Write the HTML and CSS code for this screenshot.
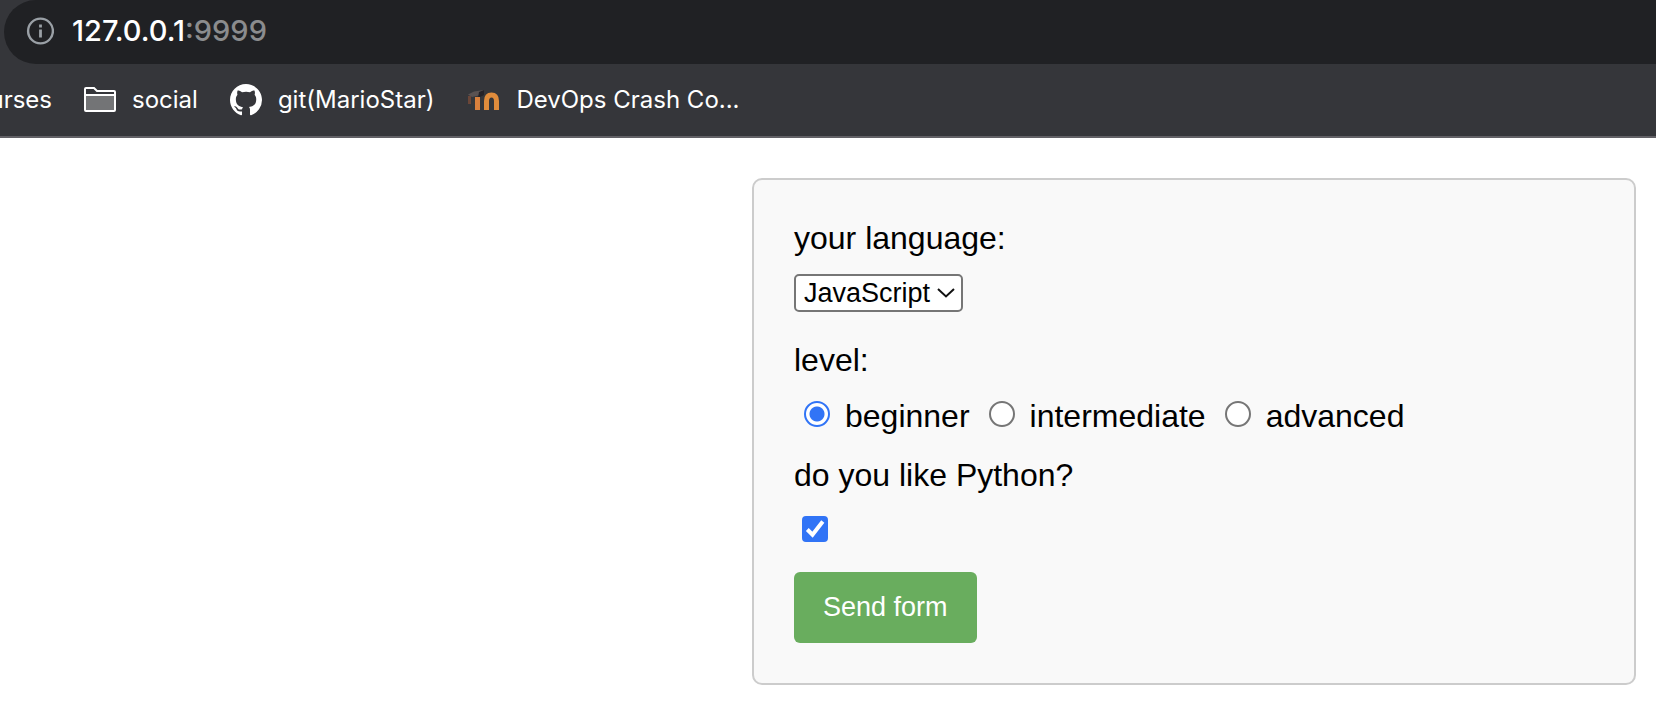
FILE: index.html
```html
<!DOCTYPE html>
<html lang="en">
<head>
<meta charset="utf-8">
<title>127.0.0.1:9999</title>
<link rel="stylesheet" href="styles.css">
</head>
<body>
<header class="browser">
  <div class="address">
    <button class="info" type="button" aria-label="Site information">
      <svg width="28" height="28" viewBox="0 0 28 28" fill="none" stroke="#9aa0a6">
        <circle cx="14.500" cy="14" r="12.4" stroke-width="2.4"/>
        <path d="M14.500 12.600V20.600M14.500 7.600V10.400" stroke-width="2.8"/>
      </svg>
    </button>
    <div class="url">127.0.0.1<span class="port">:9999</span></div>
  </div>
  <nav class="bookmarks">
    <a class="bookmark clipped" href="#">courses</a>
    <a class="bookmark" href="#">
      <svg width="32" height="32" viewBox="0 0 32 32">
        <path d="M2 11h28v16H2z" fill="#737476"/>
        <path d="M1 26V5q0-1 1-1h8l3 3H30q1 0 1 1v18q0 1-1 1H2q-1 0-1-1z" fill="none" stroke="#fff" stroke-width="2"/>
        <path d="M1 11h30" stroke="#fff" stroke-width="2"/>
      </svg>
      <span>social</span>
    </a>
    <a class="bookmark" href="#">
      <svg width="32" height="32" viewBox="0 0 16 16" fill="#fff">
        <path d="M8 0C3.580 0 0 3.580 0 8c0 3.540 2.290 6.530 5.470 7.590.4.070.55-.17.55-.38 0-.19-.01-.82-.01-1.490-2.010.37-2.530-.49-2.690-.94-.09-.23-.48-.94-.82-1.130-.28-.15-.68-.52-.01-.53.63-.01 1.080.58 1.230.82.72 1.210 1.870.87 2.330.66.07-.52.28-.87.51-1.070-1.780-.2-3.640-.89-3.640-3.950 0-.87.31-1.590.82-2.150-.08-.2-.36-1.020.08-2.120 0 0 .67-.21 2.200.82.64-.18 1.320-.27 2-.27s1.360.09 2 .27c1.530-1.040 2.200-.82 2.200-.82.44 1.100.16 1.920.08 2.120.51.56.82 1.270.82 2.150 0 3.070-1.870 3.750-3.650 3.950.29.25.54.73.54 1.480 0 1.070-.01 1.930-.01 2.200 0 .21.15.46.55.38A8.010 8.010 0 0 0 16 8c0-4.420-3.580-8-8-8z"/>
      </svg>
      <span>git(MarioStar)</span>
    </a>
    <a class="bookmark" href="#">
      <svg width="34" height="32" viewBox="0 0 34 32" fill="none">
        <path d="M2 10.500l6-3 10-1.500-3 5-9 2z" fill="#5a5252"/>
        <path d="M3.500 12v8" stroke="#6b4638" stroke-width="3"/>
        <path d="M13 8l5-2v5l-6 3z" fill="#242228"/>
        <path d="M11.500 13V26" stroke="#d9803d" stroke-width="5"/>
        <path d="M20.500 26v-9q0-6 5-6t5 6v9" stroke="#e08c3c" stroke-width="5"/>
      </svg>
      <span>DevOps Crash Co...</span>
    </a>
  </nav>
</header>
<main class="page">
  <form class="card">
    <div class="field field-select">
      <label for="language">your language:</label>
      <span class="select-wrap">
        <select id="language" class="select">
          <option>JavaScript</option>
        </select>
        <svg class="chevron" width="18" height="10" viewBox="0 0 18 10" fill="none" stroke="#111" stroke-width="2"><path d="M1 1l8 7.500L17 1"/></svg>
      </span>
    </div>
    <fieldset class="level">
      <legend>level:</legend>
      <div class="options">
        <label class="option"><input class="radio" type="radio" name="level" checked>beginner</label>
        <label class="option"><input class="radio" type="radio" name="level">intermediate</label>
        <label class="option"><input class="radio" type="radio" name="level">advanced</label>
      </div>
    </fieldset>
    <div class="field field-check">
      <label for="python">do you like Python?</label>
      <span class="check-wrap">
        <input id="python" class="checkbox" type="checkbox" checked>
        <svg class="tick" width="26" height="26" viewBox="0 0 26 26" fill="none" stroke="#fff" stroke-width="4"><path d="M5.300 13.500l5.200 5.200L20.800 5.500"/></svg>
      </span>
    </div>
    <button class="send" type="submit">Send form</button>
  </form>
</main>
</body>
</html>
```
FILE: styles.css
```css
* { box-sizing: border-box; }
body { margin: 0; background: #fff; color: #000; font-family: "Liberation Sans", Arial, sans-serif; font-size: 32px; line-height: 36px; }

.browser { background: #35363a; border-bottom: 2px solid #626166; font-family: Inter, sans-serif; color: #fff; }
.address { display: flex; align-items: center; gap: 18px; height: 64px; margin-left: 4px; padding: 0 22px 3px; background: #202124; border-radius: 34px 0 0 34px; }
.info { display: flex; padding: 0; border: 0; background: none; }
.url { font-size: 29px; font-weight: 500; }
.port { color: #8b8c8e; }
.bookmarks { display: flex; align-items: center; gap: 32px; height: 72px; overflow: hidden; }
.bookmark { display: flex; flex: none; align-items: center; gap: 16px; color: #fff; font-size: 24px; line-height: 32px; text-decoration: none; white-space: nowrap; }
.clipped { justify-content: flex-end; width: 52px; overflow: hidden; }

.page { display: grid; grid-template-columns: 188fr 221fr; padding: 40px 20px 27px 0; }
.card { grid-column: 2; padding: 40px; background: #f9f9f9; border: 2px solid #ccc; border-radius: 10px; }
.field { display: flex; flex-direction: column; align-items: flex-start; }
.field-select { gap: 18px; margin-bottom: 30px; }
.field-check { gap: 23px; margin-bottom: 30px; }
.select-wrap { position: relative; display: flex; }
.select { appearance: none; height: 38px; padding: 0 30px 0 8px; background: #fff; border: 2px solid #767676; border-radius: 5px; color: #000; font: 27px/34px "Liberation Sans", Arial, sans-serif; }
.chevron { position: absolute; right: 8px; top: 14px; pointer-events: none; }
.level { margin: 0 0 23px; padding: 0; border: 0; }
.level legend { padding: 0; margin-bottom: 20px; }
.options { display: flex; flex-wrap: wrap; gap: 19px; padding-left: 10px; }
.option { display: flex; gap: 15px; }
.radio { appearance: none; width: 26px; height: 26px; margin: 3px 0 0; border: 2px solid #767676; border-radius: 50%; background: #fff; }
.radio:checked { border-color: #3174f6; background: radial-gradient(circle, #3174f6 7px, #fff 8px); }
.check-wrap { position: relative; display: flex; margin-left: 8px; }
.checkbox { appearance: none; width: 26px; height: 26px; margin: 0; border-radius: 4px; border: 2px solid #767676; background: #fff; }
.checkbox:checked { border-color: #3174f6; background: #3174f6; }
.tick { position: absolute; inset: 0; pointer-events: none; visibility: hidden; }
.checkbox:checked + .tick { visibility: visible; }
.send { display: block; padding: 20px 29px; border: 0; border-radius: 6px; background: #69ad5e; color: #fff; font: 27px/31px "Liberation Sans", Arial, sans-serif; }
```
